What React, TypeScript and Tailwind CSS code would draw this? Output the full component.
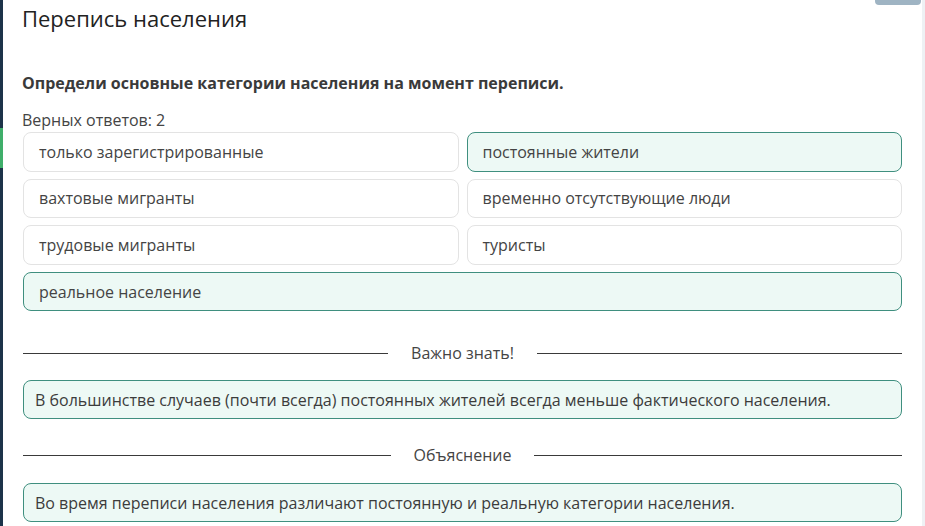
import React from "react";

const options = [
  { text: "только зарегистрированные", picked: false },
  { text: "постоянные жители", picked: true },
  { text: "вахтовые мигранты", picked: false },
  { text: "временно отсутствующие люди", picked: false },
  { text: "трудовые мигранты", picked: false },
  { text: "туристы", picked: false },
  { text: "реальное население", picked: true, wide: true },
];

function Divider({ label }: { label: string }) {
  return (
    <div className="flex items-center">
      <div className="h-px flex-1 bg-[#3a3a3a]" />
      <span className="px-[23px] text-[16px] leading-6 text-[#444]">{label}</span>
      <div className="h-px flex-1 bg-[#3a3a3a]" />
    </div>
  );
}

function Note({ children }: { children: React.ReactNode }) {
  return (
    <div className="flex h-[39px] items-center rounded-lg border border-[#3f8f7f] bg-[#edf9f5] pl-[11px] text-[16px] text-[#3c3c3c]">
      {children}
    </div>
  );
}

export default function App() {
  return (
    <div
      className="relative flex h-[526px] w-[925px] overflow-hidden bg-white"
      style={{ fontFamily: '"Open Sans", "Noto Sans", sans-serif' }}
    >
      {/* left rail */}
      <div className="flex w-[3px] flex-col">
        <div className="h-[128px] bg-[#1c3349]" />
        <div className="h-[40px] bg-[#3fae6a]" />
        <div className="flex-1 bg-[#1c3349]" />
      </div>

      {/* content */}
      <div className="flex-1 px-[20px]">
        <h1 className="-ml-px mt-[3px] text-[22px] leading-[30px] text-[#222]">
          Перепись населения
        </h1>
        <p className="-ml-px mt-[38px] text-[16px] font-bold leading-6 text-[#3a3a3a]">
          Определи основные категории населения на момент переписи.
        </p>
        <p className="-ml-px mt-[14px] text-[16px] leading-[23px] text-[#444]">
          Верных ответов: 2
        </p>

        <div className="grid grid-cols-2 gap-x-[8px] gap-y-[7px]">
          {options.map((o) => (
            <div
              key={o.text}
              className={`flex h-[39.6px] items-center rounded-lg border pl-[15px] text-[16px] text-[#444] ${
                o.picked
                  ? "border-[#3f8f7f] bg-[#edf9f5]"
                  : "border-[#e3e3e3] bg-white"
              } ${o.wide ? "col-span-2" : ""}`}
            >
              {o.text}
            </div>
          ))}
        </div>

        <div className="mt-[30px]">
          <Divider label="Важно знать!" />
        </div>
        <div className="mt-[15px]">
          <Note>
            В большинстве случаев (почти всегда) постоянных жителей всегда меньше
            фактического населения.
          </Note>
        </div>

        <div className="mt-[24px]">
          <Divider label="Объяснение" />
        </div>
        <div className="mt-[16px]">
          <Note>
            Во время переписи населения различают постоянную и реальную категории
            населения.
          </Note>
        </div>
      </div>

      {/* scrollbar track */}
      <div className="w-[3px] bg-[#eef1f4]" />

      {/* cut-off tab at the top right */}
      <div className="absolute right-[4px] top-0 h-[5px] w-[46px] rounded-b-[4px] bg-[#9fb4c3]" />
    </div>
  );
}
